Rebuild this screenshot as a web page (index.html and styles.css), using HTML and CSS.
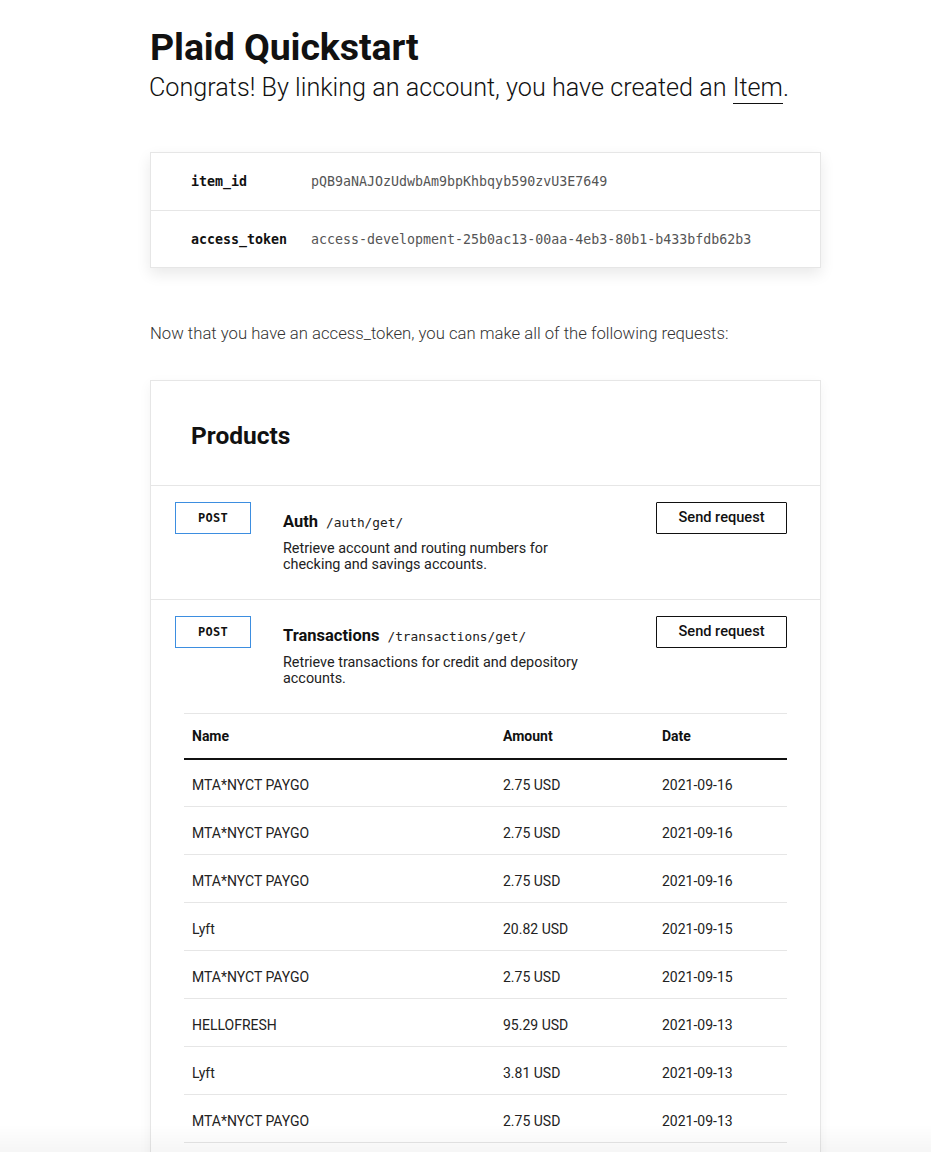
FILE: index.html
```html
<!DOCTYPE html>
<html lang="en">
<head>
<meta charset="utf-8">
<title>Plaid Quickstart</title>
<link rel="stylesheet" href="styles.css">
</head>
<body>
<main class="page">
  <header class="intro">
    <h1 class="title">Plaid Quickstart</h1>
    <p class="subtitle">Congrats! By linking an account, you have created an <span class="item-link">Item</span>.</p>
  </header>

  <section class="ids-card">
    <div class="id-row">
      <span class="id-label">item_id</span>
      <span class="id-value">pQB9aNAJOzUdwbAm9bpKhbqyb590zvU3E7649</span>
    </div>
    <div class="id-row">
      <span class="id-label">access_token</span>
      <span class="id-value">access-development-25b0ac13-00aa-4eb3-80b1-b433bfdb62b3</span>
    </div>
  </section>

  <p class="lead">Now that you have an access_token, you can make all of the following requests:</p>

  <section class="products-card">
    <div class="products-head">
      <h2 class="products-title">Products</h2>
    </div>

    <div class="endpoint">
      <div class="endpoint-main">
        <span class="method">POST</span>
        <div class="endpoint-info">
          <div class="endpoint-title"><span class="endpoint-name">Auth</span><span class="endpoint-path">/auth/get/</span></div>
          <p class="endpoint-desc">Retrieve account and routing numbers for checking and savings accounts.</p>
        </div>
        <button class="send-btn" type="button">Send request</button>
      </div>
    </div>

    <div class="endpoint">
      <div class="endpoint-main">
        <span class="method">POST</span>
        <div class="endpoint-info">
          <div class="endpoint-title"><span class="endpoint-name">Transactions</span><span class="endpoint-path">/transactions/get/</span></div>
          <p class="endpoint-desc">Retrieve transactions for credit and depository accounts.</p>
        </div>
        <button class="send-btn" type="button">Send request</button>
      </div>
      <table class="tx-table">
        <thead>
          <tr><th class="col-name">Name</th><th class="col-amount">Amount</th><th class="col-date">Date</th></tr>
        </thead>
        <tbody>
          <tr><td>MTA*NYCT PAYGO</td><td>2.75 USD</td><td>2021-09-16</td></tr>
          <tr><td>MTA*NYCT PAYGO</td><td>2.75 USD</td><td>2021-09-16</td></tr>
          <tr><td>MTA*NYCT PAYGO</td><td>2.75 USD</td><td>2021-09-16</td></tr>
          <tr><td>Lyft</td><td>20.82 USD</td><td>2021-09-15</td></tr>
          <tr><td>MTA*NYCT PAYGO</td><td>2.75 USD</td><td>2021-09-15</td></tr>
          <tr><td>HELLOFRESH</td><td>95.29 USD</td><td>2021-09-13</td></tr>
          <tr><td>Lyft</td><td>3.81 USD</td><td>2021-09-13</td></tr>
          <tr><td>MTA*NYCT PAYGO</td><td>2.75 USD</td><td>2021-09-13</td></tr>
        </tbody>
      </table>
    </div>
  </section>
</main>
<div class="bottom-fade"></div>
</body>
</html>
```

FILE: styles.css
```css
* { box-sizing: border-box; }

html, body {
  margin: 0;
  padding: 0;
  background: #fff;
}

body {
  font-family: Roboto, "Liberation Sans", Arial, sans-serif;
  color: #111;
}

.page {
  width: 671px;
  margin-left: 150px;
  padding-top: 27px;
}

.title {
  margin: 0;
  font-size: 37.5px;
  line-height: 40px;
  font-weight: 700;
  letter-spacing: -0.1px;
  color: #111;
}

.subtitle {
  margin: 5px 0 0 -1px;
  font-size: 25.2px;
  line-height: 32px;
  font-weight: 300;
  color: #111;
}

.item-link {
  display: inline-block;
  line-height: 30px;
  border-bottom: 1px solid #111;
}

.ids-card {
  margin-top: 48px;
  border: 1px solid #e6e6e6;
  background: #fff;
  box-shadow: 0 6px 14px rgba(0, 0, 0, 0.09);
}

.id-row {
  display: flex;
  align-items: center;
  height: 57px;
  padding-left: 40px;
}

.id-row + .id-row {
  border-top: 1px solid #e6e6e6;
}

.id-label {
  width: 120px;
  font-family: "DejaVu Sans Mono", "Liberation Mono", monospace;
  font-size: 13.3px;
  font-weight: 700;
  color: #111;
}

.id-value {
  font-family: "DejaVu Sans Mono", "Liberation Mono", monospace;
  font-size: 13.3px;
  color: #555;
}

.lead {
  margin: 55px 0 0 0;
  font-size: 16.7px;
  line-height: 22px;
  font-weight: 300;
  color: #333;
}

.products-card {
  margin-top: 35px;
  margin-bottom: 40px;
  border: 1px solid #e6e6e6;
  background: #fff;
  box-shadow: 0 4px 12px rgba(0, 0, 0, 0.05);
}

.products-head {
  height: 105px;
  display: flex;
  align-items: center;
  padding-left: 40px;
  padding-top: 4px;
  border-bottom: 1px solid #e6e6e6;
}

.products-title {
  margin: 0;
  font-size: 24.5px;
  font-weight: 700;
  color: #111;
}

.endpoint + .endpoint {
  border-top: 1px solid #e6e6e6;
}

.endpoint:last-child {
  padding-bottom: 40px;
}

.endpoint-main {
  display: flex;
  align-items: flex-start;
  padding: 16px 33px 26px 24px;
}

.method {
  flex: none;
  width: 76px;
  height: 32px;
  display: flex;
  align-items: center;
  justify-content: center;
  border: 1px solid #3d8ee0;
  font-family: "DejaVu Sans Mono", "Liberation Mono", monospace;
  font-size: 12px;
  font-weight: 700;
  color: #111;
  letter-spacing: 0.3px;
}

.endpoint-info {
  flex: 1;
  padding-left: 32px;
  padding-top: 10px;
}

.endpoint-title {
  display: flex;
  align-items: baseline;
  height: 24px;
}

.endpoint-name {
  font-size: 16.5px;
  font-weight: 700;
  color: #111;
}

.endpoint-path {
  margin-left: 8px;
  font-family: "DejaVu Sans Mono", "Liberation Mono", monospace;
  font-size: 12.8px;
  color: #222;
}

.endpoint-desc {
  margin: 5px 0 0 0;
  width: 300px;
  font-size: 14.4px;
  line-height: 16px;
  font-weight: 400;
  color: #222;
}

.send-btn {
  flex: none;
  width: 131px;
  height: 32px;
  border: 1px solid #111;
  border-radius: 1px;
  background: #fff;
  font-family: Roboto, "Liberation Sans", Arial, sans-serif;
  font-size: 14.6px;
  font-weight: 500;
  color: #111;
  padding: 0 0 3px 0;
}

.tx-table {
  width: 603px;
  margin: 0 33px 0 33px;
  border-collapse: collapse;
  table-layout: fixed;
  border-top: 1px solid #e6e6e6;
}

.col-name { width: 311px; }
.col-amount { width: 159px; }
.col-date { width: 133px; }

.tx-table th {
  height: 45px;
  padding: 1px 8px 0 8px;
  text-align: left;
  font-size: 14px;
  font-weight: 700;
  color: #111;
  border-bottom: 2px solid #111;
}

.tx-table td {
  height: 48px;
  padding: 5px 8px 0 8px;
  font-size: 14px;
  font-weight: 400;
  color: #222;
  border-bottom: 1px solid #e6e6e6;
}

.bottom-fade {
  position: fixed;
  left: 0;
  right: 0;
  bottom: 0;
  height: 28px;
  background: linear-gradient(to bottom, rgba(0, 0, 0, 0), rgba(0, 0, 0, 0.035));
  pointer-events: none;
}
```
